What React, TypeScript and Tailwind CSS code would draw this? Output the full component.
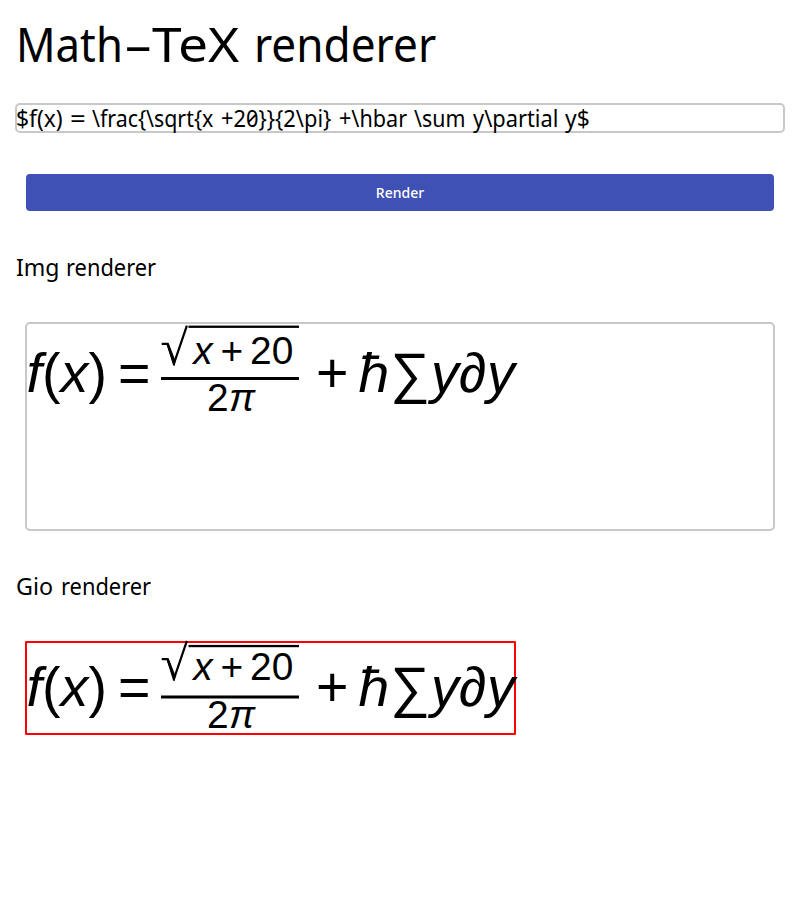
import React from "react";

type FormulaProps = {
  base: number;
  numerator: number;
  denominator: number;
  fractionBar: number;
  rootBar: number;
  rootTop: number;
};

// f(x) = sqrt(x+20) / 2pi + hbar sum y partial y
function Formula({ base, numerator, denominator, fractionBar, rootBar, rootTop }: FormulaProps) {
  return (
    <svg
      width="500"
      height="96"
      viewBox="0 0 500 96"
      className="block overflow-visible font-['Liberation_Sans',sans-serif] text-[55.6px]"
    >
      <text x="-0.6" y={base} className="italic">f</text>
      <text x="15" y={base}>(</text>
      <text x="33.6" y={base} className="italic">x</text>
      <text x="61.4" y={base}>)</text>
      <text x="91" y={base}>=</text>
      <g transform={`translate(134.7 ${rootTop})`}>
        <path d="M0 18.4H5.9L12.5 37.4L25.2 0.2" fill="none" stroke="black" strokeWidth="2.2" />
        <path d="M4.6 18L7 17.8L13.9 35.4L12.9 40H11.5Z" />
      </g>
      <rect x="161.5" y={rootBar} width="110.5" height="2.3" />
      <text x="166.3" y={numerator} className="text-[38.9px] italic">x</text>
      <text x="193.6" y={numerator} className="text-[38.9px]">+</text>
      <text x="223" y={numerator} className="text-[38.9px]">20</text>
      <rect x="134" y={fractionBar} width="138" height="3" />
      <text x="180" y={denominator} className="text-[38.9px]">2</text>
      <text x="202" y={denominator} className="text-[38.9px] italic">π</text>
      <text x="289" y={base}>+</text>
      <text x="331.6" y={base} className="italic">ħ</text>
      <text x="363.2" y={base}>∑</text>
      <text x="404" y={base} className="italic">y</text>
      <text x="431.8" y={base} className="italic">∂</text>
      <text x="460" y={base} className="italic">y</text>
    </svg>
  );
}

export default function App() {
  return (
    <main className="flex h-[900px] w-[800px] flex-col overflow-hidden bg-white px-4 font-['Noto_Sans',sans-serif] text-black">
      <h1 className="mt-3 flex h-16 whitespace-nowrap text-[48px] leading-[64px]">
        <span className="w-[109px] origin-left scale-x-[0.91]">Math</span>
        <span className="w-[27px] origin-left scale-x-[1.1]">–</span>
        <span className="w-[102px] origin-left scale-x-[1.11]">TeX</span>
        <span className="origin-left scale-x-[0.92]">renderer</span>
      </h1>
      <div className="-mx-px mt-[27px] flex h-[30px] items-center whitespace-nowrap rounded-[5px] border-2 border-[#c8c8c8] text-[24px] leading-[26px] [font-feature-settings:'zero']">
        <span className="-ml-px w-[54px] origin-left scale-x-[0.95]">$f(x)</span>
        <span className="w-[22px] origin-left scale-x-[1.15]">=</span>
        <span className="w-[129px] origin-left scale-x-[0.89]">{"\\frac{\\sqrt{x"}</span>
        <span className="w-[118px] origin-left scale-x-[0.91]">{"+20}}{2\\pi}"}</span>
        <span className="w-[75px] origin-left scale-x-[0.9]">{"+\\hbar"}</span>
        <span className="w-[59px] origin-left scale-x-[0.89]">{"\\sum"}</span>
        <span className="w-[92px] origin-left scale-x-[0.91]">{"y\\partial"}</span>
        <span className="origin-left scale-x-[0.95]">y$</span>
      </div>
      <button className="mx-2.5 mt-[41px] flex h-[37px] items-center justify-center rounded-[4px] bg-[#3f51b5] text-[14px] font-medium text-white">
        Render
      </button>
      <h2 className="mt-10 flex h-8 text-[24px] leading-8">
        <span className="w-[50px] origin-left scale-x-[0.96]">Img</span>
        <span className="origin-left scale-x-[0.91]">renderer</span>
      </h2>
      <div className="mx-[9px] mt-[39px] h-[209px] rounded-[5px] border-2 border-[#c8c8c8]">
        <Formula base={67.5} numerator={39.6} denominator={87} fractionBar={53} rootBar={1.6} rootTop={1.5} />
      </div>
      <h2 className="mt-[39px] flex h-8 text-[24px] leading-8">
        <span className="w-[45px] origin-left scale-x-[0.97]">Gio</span>
        <span className="origin-left scale-x-[0.91]">renderer</span>
      </h2>
      <div className="ml-[9px] mt-[39px] h-[94px] w-[491px] rounded-[1px] border-2 border-[#f00]">
        <Formula base={62.8} numerator={37} denominator={84.7} fractionBar={52.5} rootBar={1.9} rootTop={-2.3} />
      </div>
    </main>
  );
}
